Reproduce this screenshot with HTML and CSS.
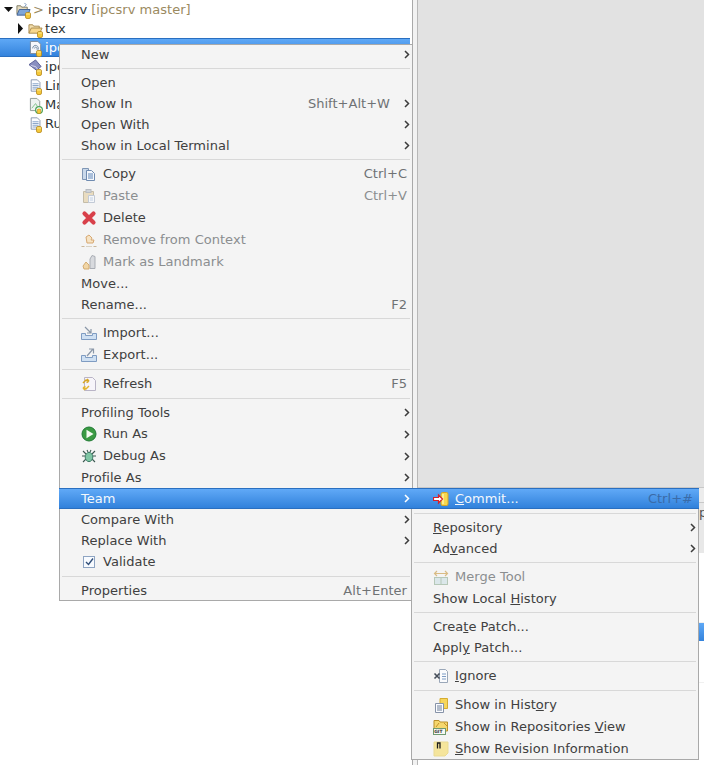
FILE: index.html
```html
<!DOCTYPE html>
<html lang="en">
<head>
<meta charset="utf-8">
<title>Eclipse context menu</title>
<link rel="stylesheet" href="styles.css">
</head>
<body>
<svg class="defs" width="0" height="0">
  <symbol id="cyl" viewBox="0 0 6 7"><rect x="0.5" y="0.5" width="5" height="6" rx="1.5" fill="#f5c93a" stroke="#b8891c" stroke-width="0.8"/><path d="M1 2h4" stroke="#fff3b0" stroke-width="0.8"/></symbol>
  <symbol id="doc" viewBox="0 0 16 16"><path d="M2.500 1.500h7l3 3v10h-10z" fill="#fbfcff" stroke="#7f8ea8"/><path d="M4 6h7M4 8h7M4 10h7M4 12h7" stroke="#7d9cc4"/></symbol>
  <symbol id="folder" viewBox="0 0 16 16"><path d="M1 13V4h4l1 1.500h6V8" fill="#f3dfae" stroke="#a88a4e"/><path d="M1 13l2.500-5.500H15L12.500 13z" fill="#f7d78e" stroke="#a88a4e"/></symbol>
  <symbol id="pfolder" viewBox="0 0 16 16"><path d="M1 13V4h4l1 1.500h6V8" fill="#e6dcc0" stroke="#7d7a62"/><path d="M1 14l2.500-6H15l-2.500 6z" fill="#7fa6d8" stroke="#3f5f90"/><path d="M9 1l2 2-2 2" fill="none" stroke="#6f8fb8"/></symbol>
  <symbol id="copy" viewBox="0 0 16 16"><path d="M1.500 2.500h6v11h-6z" fill="#c9d8ea" stroke="#7f96b5"/><path d="M5.500 4.500h5l3 3v7h-8z" fill="#f4f7fc" stroke="#6f8bb0"/><path d="M7 8h5M7 10h5M7 12h5" stroke="#5f86b8"/></symbol>
  <symbol id="paste" viewBox="0 0 16 16"><path d="M2.500 3.500h10v11h-10z" fill="#e9dcc0" stroke="#c4bca8"/><rect x="5" y="1.500" width="5" height="3" fill="#cfd3d8" stroke="#b8bcc2"/><path d="M7.500 7.500h6v7h-6z" fill="#f5f7fa" stroke="#c2cad6"/><path d="M9 10h3M9 12h3" stroke="#c2d0e2"/></symbol>
  <symbol id="del" viewBox="0 0 16 16"><path d="M3.500 3.500l9 9M12.500 3.500l-9 9" stroke="#d8404a" stroke-width="4.200" stroke-linecap="round"/></symbol>
  <symbol id="ctx" viewBox="0 0 16 16"><path d="M0.500 14.500h3M12.500 14.500h3" stroke="#c9b79b"/><path d="M5 5l3-2 3 3-1 2h3l-1 3H6z" fill="#f6e3c4" stroke="#d7a872"/><path d="M5 14.500h6" stroke="#d9d2c4"/></symbol>
  <symbol id="mark" viewBox="0 0 16 16"><path d="M11 1.500l3 1v12h-5V5z" fill="#d8dade" stroke="#a9adb4"/><path d="M2 12l3-4 3 3v4H3z" fill="#f1d6a6" stroke="#d3ab70"/></symbol>
  <symbol id="imp" viewBox="0 0 16 16"><path d="M0.500 8.500h4v2h7v-2h4v6H.5z" fill="#cfe0f2" stroke="#7f9cc2"/><path d="M4 2l6 6M10 4v4H6" fill="none" stroke="#8a97a8" stroke-width="1.200"/></symbol>
  <symbol id="exp" viewBox="0 0 16 16"><path d="M0.500 8.500h4v2h7v-2h4v6H.5z" fill="#cfe0f2" stroke="#7f9cc2"/><path d="M6 9l6-7M8 2h4.500v4.500" fill="none" stroke="#8a97a8" stroke-width="1.200"/></symbol>
  <symbol id="ref" viewBox="0 0 16 16"><path d="M3.500 1.500h8l3 3v10h-11z" fill="#f7f5fa" stroke="#b9b4c6"/><path d="M2 7l3-3 3 1M8 5L6 3M8 5L5.500 6.500" fill="none" stroke="#d7a521" stroke-width="1.500"/><path d="M8 10l-3 3-3-1M2 12l2 2M2 12l2.500-1.500" fill="none" stroke="#e3b52f" stroke-width="1.500"/></symbol>
  <symbol id="run" viewBox="0 0 16 16"><circle cx="8" cy="8" r="7" fill="#3a9a42" stroke="#1f7a34"/><path d="M5.500 3.800v8.400L12.500 8z" fill="#f4fbf1"/></symbol>
  <symbol id="bug" viewBox="0 0 16 16"><path d="M2 3l3 3M14 3l-3 3M1 8h3M15 8h-3M2 14l3-3M14 14l-3-3M6 2l1 2M10 2L9 4" stroke="#3d5a52" stroke-width="1.100"/><ellipse cx="8" cy="9" rx="3.800" ry="4.600" fill="#7fc6a4" stroke="#3d7a66"/></symbol>
  <symbol id="chk" viewBox="0 0 16 16"><rect x="2.500" y="2.500" width="11" height="11" fill="#f8fbff" stroke="#8ea4c2"/><path d="M5 8l2.500 2.500L12 4.500" fill="none" stroke="#33507a" stroke-width="1.400"/></symbol>
  <symbol id="commit" viewBox="0 0 16 16"><rect x="8" y="1.500" width="7" height="13" rx="1.500" fill="#f7d84f" stroke="#d9a522"/><path d="M10 3v10" stroke="#fff3a8" stroke-width="1.500"/><path d="M0.500 6.500h5V4l4 4-4 4V9.500h-5z" fill="#fff" stroke="#d8202a" stroke-width="1.200"/></symbol>
  <symbol id="merge" viewBox="0 0 16 16"><path d="M1.500 4.500h13M4 2L1.500 4.500 4 7M12 2l2.500 2.500L12 7" fill="none" stroke="#d9bb83" stroke-width="1.200"/><rect x="1.500" y="8.500" width="13" height="7" fill="#dbe7ea" stroke="#b6c8b8"/><path d="M8 8.500v7" stroke="#b6c8b8"/></symbol>
  <symbol id="ign" viewBox="0 0 16 16"><path d="M6.500 1.500h6l2 2v11h-8z" fill="#fafbfd" stroke="#9aa7b8"/><path d="M9 6h4M9 8.500h4M9 11h4" stroke="#7d9cc4"/><path d="M1.500 5.500l5 5M6.500 5.500l-5 5" stroke="#444c58" stroke-width="1.600"/></symbol>
  <symbol id="hist" viewBox="0 0 16 16"><path d="M7 1.500h7.500v10H7z" fill="#f6d65c" stroke="#d6ac30"/><path d="M2.500 6.500h8v9h-8z" fill="#fbfcff" stroke="#8693a8"/><path d="M4 9h5M4 11h5M4 13h5" stroke="#6d7f98"/></symbol>
  <symbol id="repo" viewBox="0 0 16 16"><path d="M1 10V1.500h5l1 1.500h7.500v9H12" fill="#f5d76e" stroke="#b98f2a"/><path d="M3 8l3-4M11 4l3 3" stroke="#c4932a"/><rect x="0.500" y="9.500" width="12" height="6" fill="#f8f8f4" stroke="#6f9a70"/><text x="1.200" y="14.300" class="git">GIT</text></symbol>
  <symbol id="rev" viewBox="0 0 16 16"><path d="M1 1h14v11l-3 3H1z" fill="#f5e59c" stroke="#eadb93"/><path d="M4.500 7.500V2h2.500v5.500" fill="none" stroke="#1c1c1c" stroke-width="1.300"/></symbol>
  <symbol id="cylg" viewBox="0 0 8 8"><circle cx="4" cy="4" r="3.400" fill="#fff" stroke="#4aa55a" stroke-width="1.200"/><rect x="2.200" y="3" width="3.600" height="4.500" rx="1" fill="#f5c93a" stroke="#b8891c" stroke-width="0.600"/></symbol>
</svg>

<div class="app">
  <div class="tree">
    <div class="node node-root">
      <svg class="tw-down" viewBox="0 0 9 5"><path d="M0 0h9L4.500 5z"/></svg>
      <span class="ic"><svg class="ic-main" viewBox="0 0 16 16"><use href="#pfolder"/></svg><svg class="deco" viewBox="0 0 6 7"><use href="#cyl"/></svg></span>
      <span class="label"><span class="dirty">&gt;</span> ipcsrv <span class="dirty">[ipcsrv master]</span></span>
    </div>
    <div class="node node-dir">
      <svg class="tw-right" viewBox="0 0 5 11"><path d="M0 0v11l5-5.500z"/></svg>
      <span class="ic ic-tight"><svg class="ic-main" viewBox="0 0 16 16"><use href="#folder"/></svg><svg class="deco" viewBox="0 0 6 7"><use href="#cyl"/></svg></span>
      <span class="label">tex</span>
    </div>
    <div class="node node-file selected">
      <span class="ic"><svg class="ic-main" viewBox="0 0 15 16"><path d="M1.500 1.500h8l3 3v10h-11z" fill="#f6f8fc" stroke="#7d8997"/><path d="M4 9a3 3 0 1 1 5 2M6 9a1.300 1.300 0 1 1 2 1" fill="none" stroke="#6f86a0"/></svg><svg class="deco" viewBox="0 0 6 7"><use href="#cyl"/></svg></span>
      <span class="label">ipcsrv.c</span>
    </div>
    <div class="node node-file">
      <span class="ic"><svg class="ic-main" viewBox="0 0 15 16"><path d="M0 6l7-5 6 7-5 4z" fill="#8a8fc0" stroke="#565a92"/><path d="M2 7l5 1 3 4" fill="none" stroke="#d8d8f0"/></svg><svg class="deco" viewBox="0 0 6 7"><use href="#cyl"/></svg></span>
      <span class="label">ipcsrv</span>
    </div>
    <div class="node node-file">
      <span class="ic"><svg class="ic-main" viewBox="0 0 15 16"><use href="#doc"/></svg><svg class="deco" viewBox="0 0 6 7"><use href="#cyl"/></svg></span>
      <span class="label">Linkfile</span>
    </div>
    <div class="node node-file node-make">
      <span class="ic"><svg class="ic-main" viewBox="0 0 15 16"><path d="M1.500 1.500h7l3 3v10h-10z" fill="#eef2f0" stroke="#8f9a94"/><path d="M3 12l4-5 2 3" fill="none" stroke="#7fc08a"/></svg><svg class="deco deco-green" viewBox="0 0 8 8"><use href="#cylg"/></svg></span>
      <span class="label">Makefile</span>
    </div>
    <div class="node node-file">
      <span class="ic"><svg class="ic-main" viewBox="0 0 15 16"><use href="#doc"/></svg><svg class="deco" viewBox="0 0 6 7"><use href="#cyl"/></svg></span>
      <span class="label">Run</span>
    </div>
  </div>
  <div class="sash"></div>
  <div class="right">
    <div class="editor"></div>
    <div class="lower">
      <div class="tabs"></div>
      <div class="toolbar">p</div>
      <div class="list">
        <div class="list-a"></div>
        <div class="list-sel"></div>
        <div class="list-b"></div>
      </div>
    </div>
  </div>
</div>

<div class="menu menu-main">
  <div class="item"><span>New</span><svg class="arrow" viewBox="0 0 6 9"><path d="M1 1l3.500 3.500L1 8"/></svg></div>
  <div class="sep"></div>
  <div class="item"><span>Open</span></div>
  <div class="item"><span>Show In</span><span class="sc sc-sub">Shift+Alt+W</span><svg class="arrow arrow-sc" viewBox="0 0 6 9"><path d="M1 1l3.500 3.500L1 8"/></svg></div>
  <div class="item"><span>Open With</span><svg class="arrow" viewBox="0 0 6 9"><path d="M1 1l3.500 3.500L1 8"/></svg></div>
  <div class="item"><span>Show in Local Terminal</span><svg class="arrow" viewBox="0 0 6 9"><path d="M1 1l3.500 3.500L1 8"/></svg></div>
  <div class="sep"></div>
  <div class="item tall"><svg class="mi" viewBox="0 0 16 16"><use href="#copy"/></svg><span>Copy</span><span class="sc">Ctrl+C</span></div>
  <div class="item tall off"><svg class="mi" viewBox="0 0 16 16"><use href="#paste"/></svg><span>Paste</span><span class="sc">Ctrl+V</span></div>
  <div class="item tall"><svg class="mi" viewBox="0 0 16 16"><use href="#del"/></svg><span>Delete</span></div>
  <div class="item tall off"><svg class="mi" viewBox="0 0 16 16"><use href="#ctx"/></svg><span>Remove from Context</span></div>
  <div class="item tall off"><svg class="mi" viewBox="0 0 16 16"><use href="#mark"/></svg><span>Mark as Landmark</span></div>
  <div class="item"><span>Move...</span></div>
  <div class="item"><span>Rename...</span><span class="sc">F2</span></div>
  <div class="sep"></div>
  <div class="item tall"><svg class="mi" viewBox="0 0 16 16"><use href="#imp"/></svg><span>Import...</span></div>
  <div class="item tall"><svg class="mi" viewBox="0 0 16 16"><use href="#exp"/></svg><span>Export...</span></div>
  <div class="sep"></div>
  <div class="item tall"><svg class="mi" viewBox="0 0 16 16"><use href="#ref"/></svg><span>Refresh</span><span class="sc">F5</span></div>
  <div class="sep"></div>
  <div class="item"><span>Profiling Tools</span><svg class="arrow" viewBox="0 0 6 9"><path d="M1 1l3.500 3.500L1 8"/></svg></div>
  <div class="item tall"><svg class="mi" viewBox="0 0 16 16"><use href="#run"/></svg><span>Run As</span><svg class="arrow" viewBox="0 0 6 9"><path d="M1 1l3.500 3.500L1 8"/></svg></div>
  <div class="item tall"><svg class="mi" viewBox="0 0 16 16"><use href="#bug"/></svg><span>Debug As</span><svg class="arrow" viewBox="0 0 6 9"><path d="M1 1l3.500 3.500L1 8"/></svg></div>
  <div class="item"><span>Profile As</span><svg class="arrow" viewBox="0 0 6 9"><path d="M1 1l3.500 3.500L1 8"/></svg></div>
  <div class="item active"><span>Team</span><svg class="arrow" viewBox="0 0 6 9"><path d="M1 1l3.500 3.500L1 8"/></svg></div>
  <div class="item"><span>Compare With</span><svg class="arrow" viewBox="0 0 6 9"><path d="M1 1l3.500 3.500L1 8"/></svg></div>
  <div class="item"><span>Replace With</span><svg class="arrow" viewBox="0 0 6 9"><path d="M1 1l3.500 3.500L1 8"/></svg></div>
  <div class="item tall"><svg class="mi" viewBox="0 0 16 16"><use href="#chk"/></svg><span>Validate</span></div>
  <div class="sep"></div>
  <div class="item"><span>Properties</span><span class="sc">Alt+Enter</span></div>
</div>

<div class="menu menu-sub">
  <div class="item active"><svg class="mi" viewBox="0 0 16 16"><use href="#commit"/></svg><span><u>C</u>ommit...</span><span class="sc">Ctrl+#</span></div>
  <div class="sep"></div>
  <div class="item"><span><u>R</u>epository</span><svg class="arrow" viewBox="0 0 6 9"><path d="M1 1l3.500 3.500L1 8"/></svg></div>
  <div class="item"><span>Ad<u>v</u>anced</span><svg class="arrow" viewBox="0 0 6 9"><path d="M1 1l3.500 3.500L1 8"/></svg></div>
  <div class="sep"></div>
  <div class="item tall off"><svg class="mi" viewBox="0 0 16 16"><use href="#merge"/></svg><span>Merge Tool</span></div>
  <div class="item"><span>Show Local <u>H</u>istory</span></div>
  <div class="sep"></div>
  <div class="item"><span>Crea<u>t</u>e Patch...</span></div>
  <div class="item"><span>Appl<u>y</u> Patch...</span></div>
  <div class="sep"></div>
  <div class="item tall"><svg class="mi" viewBox="0 0 16 16"><use href="#ign"/></svg><span><u>I</u>gnore</span></div>
  <div class="sep"></div>
  <div class="item tall"><svg class="mi" viewBox="0 0 16 16"><use href="#hist"/></svg><span>Show in Hist<u>o</u>ry</span></div>
  <div class="item tall"><svg class="mi" viewBox="0 0 16 16"><use href="#repo"/></svg><span>Show in Repositories <u>V</u>iew</span></div>
  <div class="item tall"><svg class="mi" viewBox="0 0 16 16"><use href="#rev"/></svg><span><u>S</u>how Revision Information</span></div>
</div>
</body>
</html>
```

FILE: styles.css
```css
* { box-sizing: border-box; }
html, body { margin: 0; height: 100%; overflow: hidden; }
body { font-family: "DejaVu Sans", sans-serif; font-size: 13px; letter-spacing: 0.03px; color: #404040; background: #fff; }
.defs { position: absolute; }
.git { font-family: "DejaVu Sans", sans-serif; font-size: 4.4px; font-weight: 700; fill: #333; }

.app { display: flex; height: 765px; }

/* left tree */
.tree { width: 413px; flex: none; border-right: 1px solid #a9a9a9; background: #fff; }
.node { display: flex; align-items: center; height: 19px; white-space: pre; color: #2e3436; }
.node-root { padding-left: 4px; }
.node-root .ic { margin-right: 1px; }
.node-dir { padding-left: 18px; }
.node-file { padding-left: 29px; }
.selected { margin-right: 2px; background: linear-gradient(#5ea8f6, #3483dc); border-top: 1px solid #2a6fc0; border-bottom: 1px solid #2a6fc0; color: #fff; }
.tw-down { width: 9px; height: 5px; margin-right: 3px; fill: #111; }
.tw-right { width: 5px; height: 11px; margin-right: 5px; fill: #111; }
.ic { position: relative; display: block; width: 16px; height: 16px; margin-right: 2px; flex: none; }
.ic-tight { margin-right: 1px; }
.node-file .ic { margin-right: 0; }
.ic-main { display: block; width: 15px; height: 15px; }
.node-file .ic-main { width: 14px; height: 15px; }
.deco { position: absolute; right: 1px; bottom: -1px; width: 6px; height: 7px; }
.node-file .deco { right: 3px; }
.node-make .deco-green { right: 2px; width: 8px; height: 8px; }
.dirty { color: #9b8a5f; }

/* sash and right */
.sash { width: 4px; flex: none; background: #f2f2f2; }
.right { flex: 1; display: flex; flex-direction: column; border-left: 1px solid #b8b8b8; }
.editor { height: 487px; flex: none; background: #e2e2e2; }
.lower { flex: 1; display: flex; flex-direction: column; background: #fff; }
.tabs { height: 16px; flex: none; background: #ececec; border-top: 1px solid #c8c8c8; border-bottom: 1px solid #c8c8c8; }
.toolbar { height: 50px; flex: none; padding: 2px 0 0 281px; background: #e8e8e8; color: #555; overflow: hidden; }
.list { flex: 1; display: flex; flex-direction: column; }
.list-a { height: 70px; flex: none; border-top: 32px solid #fff; border-bottom: 1px solid #f0f0f0; }
.list-sel { height: 18px; flex: none; background: linear-gradient(#5ea8f6, #3483dc); }
.list-b { height: 42px; flex: none; border-bottom: 1px solid #f0f0f0; }

/* menus */
.menu { position: absolute; display: flex; flex-direction: column; background: #f4f4f4; border: 1px solid #a9a9a9; }
.menu-main { left: 59px; top: 44px; width: 354px; height: 557px; }
.menu-sub { left: 411px; top: 488px; width: 288px; height: 272px; }
.item { display: flex; align-items: center; flex: none; height: 21px; padding-left: 21px; white-space: pre; }
.item:first-child { margin-top: -1px; }
.item.tall { height: 22px; }
.tall span { margin-bottom: 2px; }
.mi { width: 16px; height: 16px; margin-right: 6px; flex: none; }
.off { color: #8b8e90; }
.active { margin-left: -1px; margin-right: -1px; padding-left: 22px; padding-right: 1px; background: linear-gradient(#60a9f7, #3181db); border-top: 1px solid #2a6fc0; border-bottom: 1px solid #2a6fc0; color: #f4f8fc; }
.menu-sub .active { margin-bottom: 1px; }
.sc { margin-left: auto; padding-right: 5px; color: #6f7274; }
.off .sc { color: #8b8e90; }
.sc-sub { padding-right: 14px; }
.active .sc { color: #3a6ba8; }
.arrow { width: 6px; height: 9px; margin-left: auto; margin-right: 2px; fill: none; stroke: #3c3c3c; stroke-width: 1.5; flex: none; }
.arrow-sc { margin-left: 0; }
.active .arrow { stroke: #fff; }
.sep { flex: none; height: 1px; margin: 3px 2px; background: #d8d8d8; }
```
